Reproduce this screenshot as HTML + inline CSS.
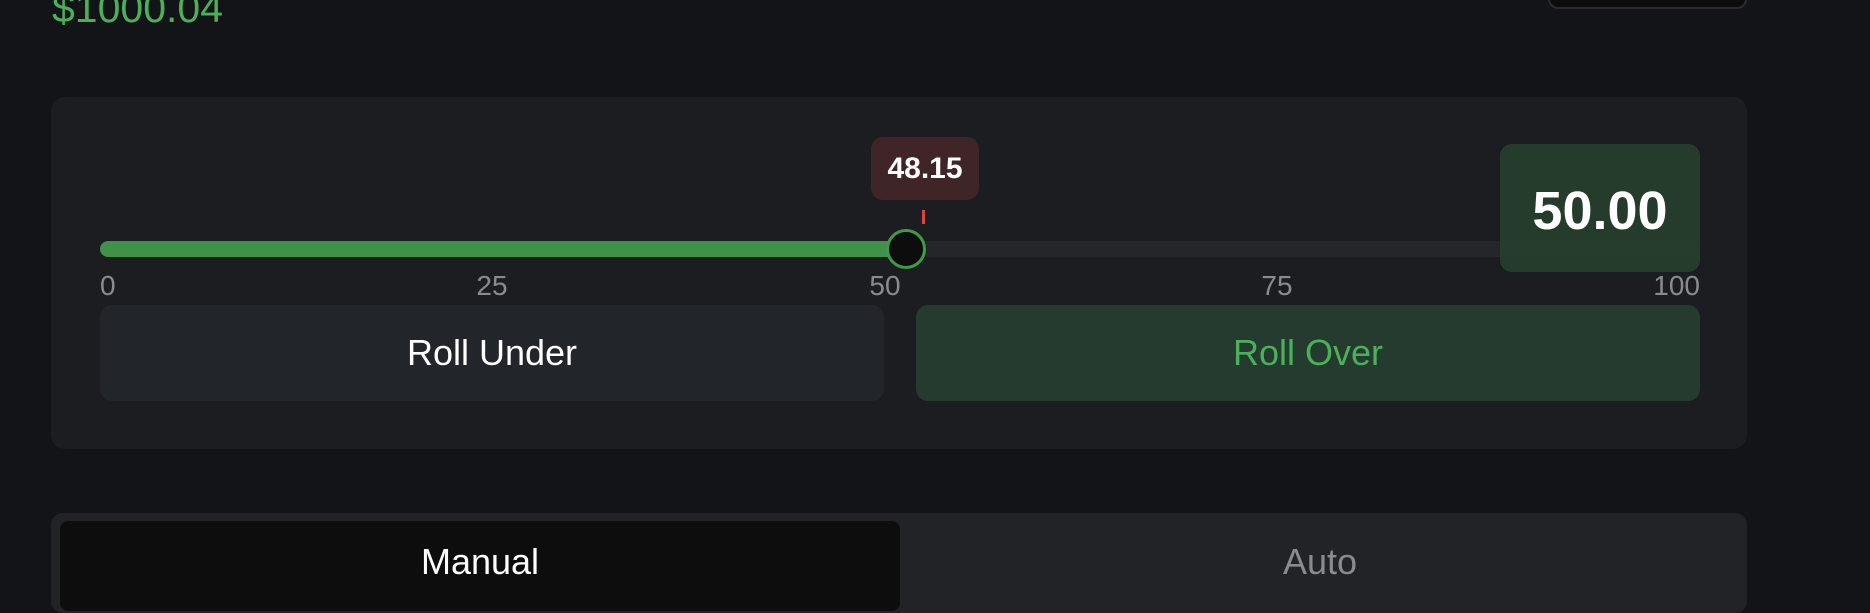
<!DOCTYPE html>
<html><head><style>
*{margin:0;padding:0;box-sizing:border-box}
body{width:1870px;height:564px;background:#131418;overflow:hidden;position:relative;font-family:"Liberation Sans",sans-serif}
.a{position:absolute}
</style></head><body>
<div class="a" style="left:52px;top:-16px;font-size:41px;color:#4cb05a;line-height:48px">$1000.04</div>
<div class="a" style="left:1548px;top:-20px;width:199px;height:29px;background:#0c0c0d;border:2px solid #2a2b2e;border-radius:10px"></div>
<div class="a" style="left:51px;top:97px;width:1696px;height:352px;background:#1c1d21;border-radius:14px"></div>
<div class="a" style="left:100px;top:241px;width:1600px;height:16px;background:#25262a;border-radius:8px"></div>
<div class="a" style="left:100px;top:241px;width:806px;height:16px;background:#3f9247;border-radius:8px"></div>
<div class="a" style="left:886px;top:229px;width:40px;height:40px;background:#0d0d0d;border:3px solid #3f9a48;border-radius:50%"></div>
<div class="a" style="left:871px;top:137px;width:108px;height:63px;background:#3f2527;border-radius:12px;color:#fff;font-weight:bold;font-size:30px;text-align:center;line-height:63px">48.15</div>
<div class="a" style="left:922px;top:210px;width:3px;height:14px;background:#d9463f"></div>
<div class="a" style="left:1500px;top:144px;width:200px;height:128px;background:rgba(38,62,46,0.92);border-radius:12px;color:#fff;font-weight:bold;font-size:54px;text-align:center;line-height:134px">50.00</div>
<div class="a" style="left:100px;top:270px;font-size:28px;color:#8a8b90;line-height:32px">0</div>
<div class="a" style="left:462px;top:270px;width:60px;text-align:center;font-size:28px;color:#8a8b90;line-height:32px">25</div>
<div class="a" style="left:855px;top:270px;width:60px;text-align:center;font-size:28px;color:#8a8b90;line-height:32px">50</div>
<div class="a" style="left:1247px;top:270px;width:60px;text-align:center;font-size:28px;color:#8a8b90;line-height:32px">75</div>
<div class="a" style="left:1600px;top:270px;width:100px;text-align:right;font-size:28px;color:#8a8b90;line-height:32px">100</div>
<div class="a" style="left:100px;top:305px;width:784px;height:96px;background:#22252a;border-radius:12px;color:#fff;font-size:36px;text-align:center;line-height:96px">Roll Under</div>
<div class="a" style="left:916px;top:305px;width:784px;height:96px;background:#253b2f;border-radius:12px;color:#4cb05a;font-size:36px;text-align:center;line-height:96px">Roll Over</div>
<div class="a" style="left:51px;top:513px;width:1696px;height:100px;background:#222326;border-radius:12px"></div>
<div class="a" style="left:60px;top:521px;width:840px;height:90px;background:#0d0d0d;border-radius:8px;color:#fff;font-size:36px;text-align:center;line-height:82px">Manual</div>
<div class="a" style="left:900px;top:521px;width:840px;height:90px;color:#8a8b90;font-size:36px;text-align:center;line-height:82px">Auto</div>
</body></html>
